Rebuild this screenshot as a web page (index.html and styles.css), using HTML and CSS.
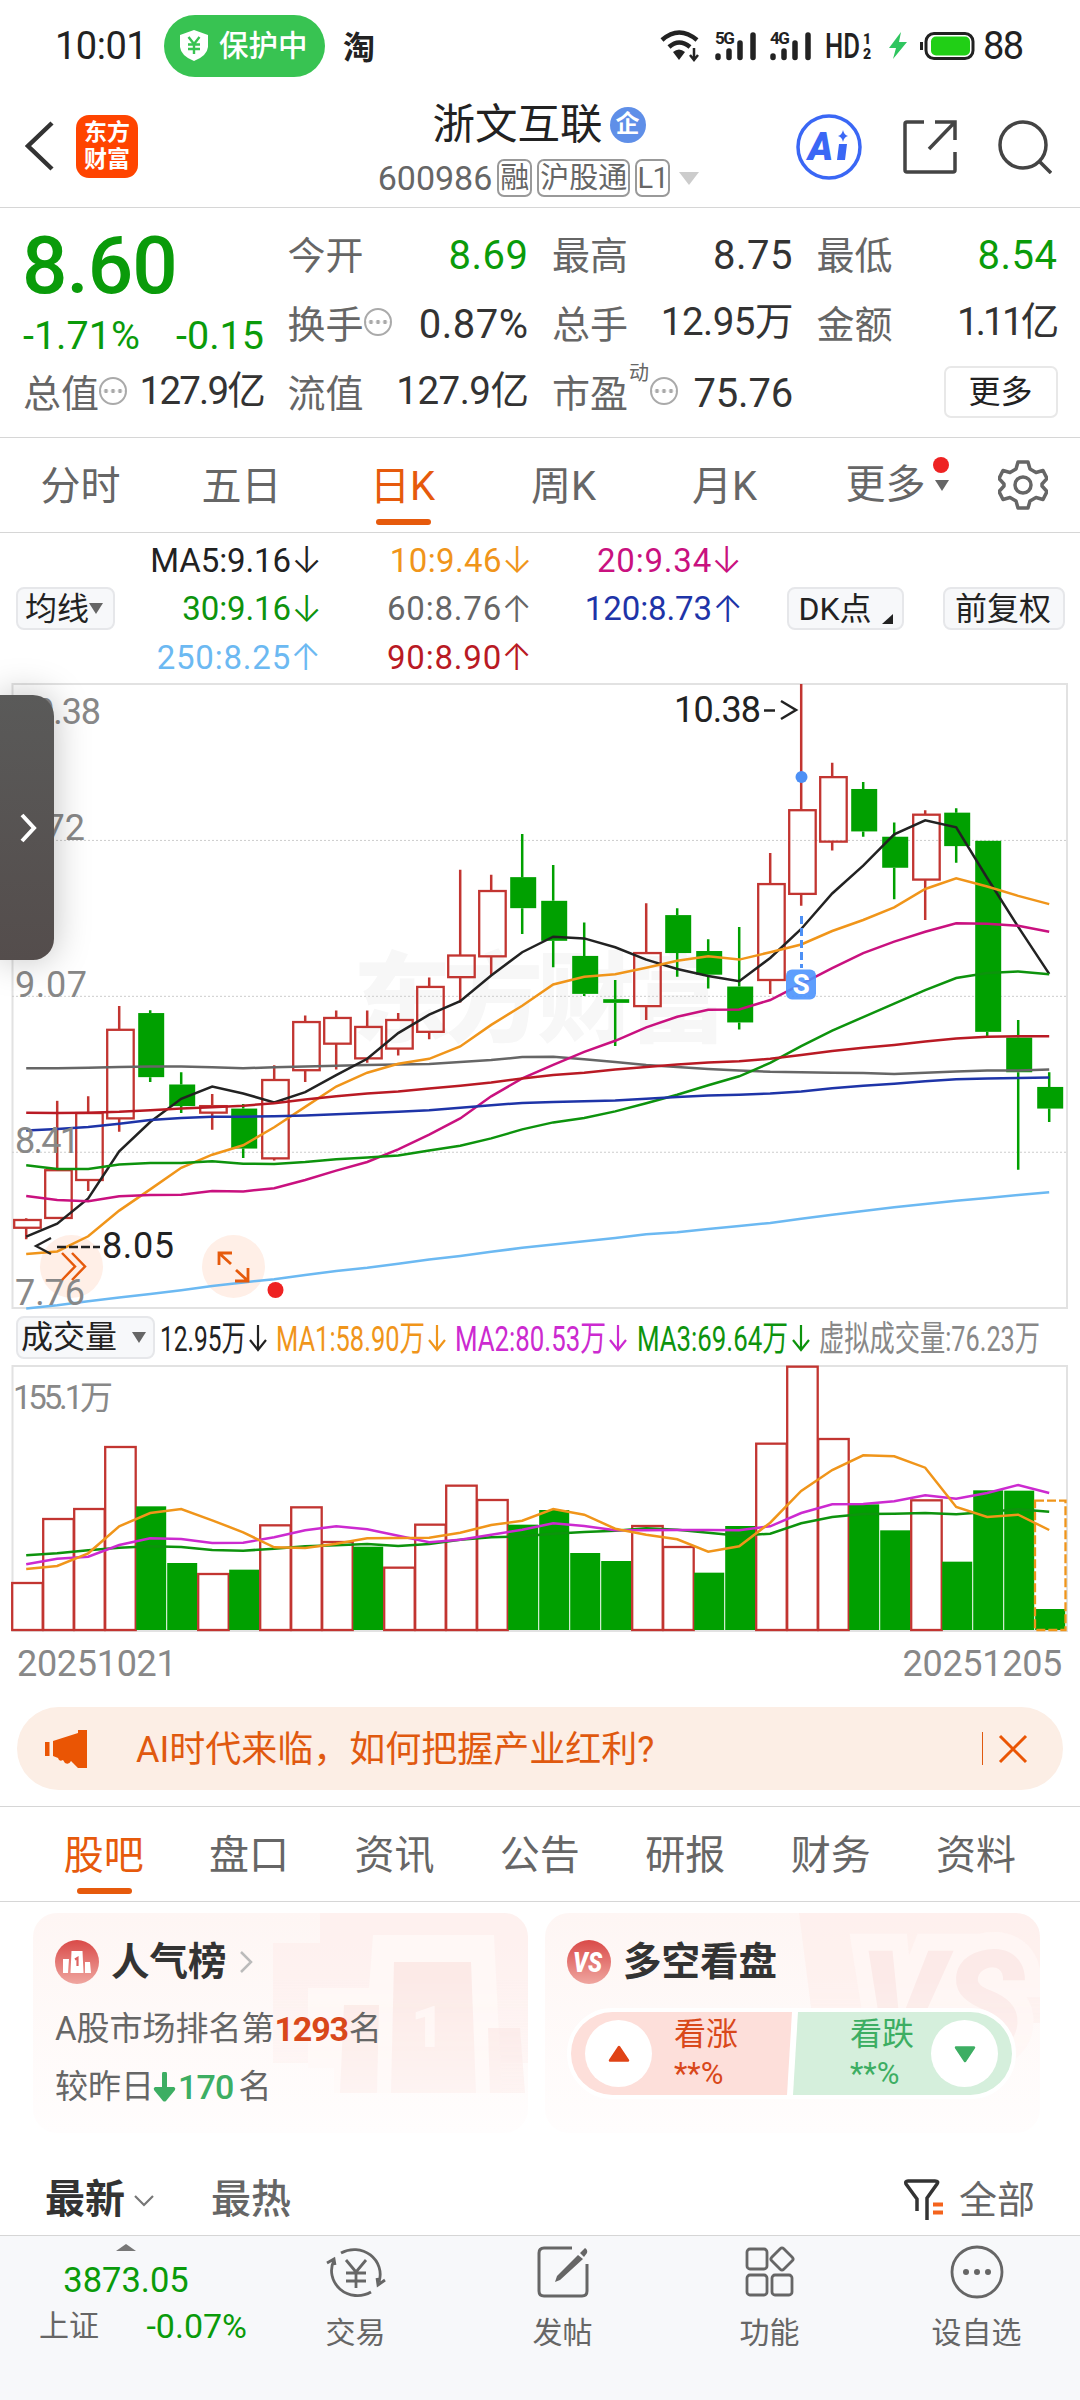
FILE: index.html
```html
<!DOCTYPE html>
<html lang="zh-CN">
<head>
    <meta charset="UTF-8">
    <meta name="viewport" content="width=device-width, initial-scale=1.0">
    <title>浙文互联 600986</title>
    <link rel="stylesheet" href="styles.css">
</head>
<body>
    <div id="app">
        <!-- 状态栏 -->
        <div class="status-bar">
            <span class="time">10:01</span>
            <span class="protect">
                <svg width="28" height="31" viewBox="0 0 28 31"><path d="M14 0L28 5V17Q27 26 14 31Q1 26 0 17V5Z" fill="#fff"/><path d="M8.500 7L14 14L19.500 7M8 14.500H20M8 19H20M14 14V24" fill="none" stroke="#38c352" stroke-width="2.400"/></svg>
                保护中
            </span>
            <span class="tao">淘</span>
            <div class="status-icons">
                <svg width="370" height="40" viewBox="0 0 370 40">
                    <g fill="none" stroke="#222" stroke-width="4.500">
                        <path d="M2 14Q19 -1 37 14"/>
                        <path d="M9 21Q19 12 30 21"/>
                    </g>
                    <path d="M13 26Q19 21 25 26L19 34Z" fill="#222"/>
                    <path d="M34 22V33M30 29L34 34L38 29" fill="none" stroke="#222" stroke-width="2.500"/>
                    <g stroke="#222" stroke-width="5.500" stroke-linecap="round">
                        <path d="M58 30V31.500M69 25V31.500M80 17V31.500M93 9V31.500"/>
                        <path d="M113 30V31.500M124 25V31.500M135 17V31.500M148 9V31.500"/>
                    </g>
                    <text x="55" y="18" class="net">5G</text>
                    <text x="110" y="18" class="net">4G</text>
                    <text x="165" y="32" class="hd" textLength="35" lengthAdjust="spacingAndGlyphs">HD</text>
                    <text x="203" y="18" class="sub">1</text>
                    <text x="203" y="33" class="sub">2</text>
                    <path d="M241 6L229 22H236L233 33L247 16H239Z" fill="#2fc55f"/>
                    <path d="M261.500 16V24" stroke="#222" stroke-width="3"/>
                    <rect x="266" y="7.500" width="47" height="25" rx="8" fill="#fff" stroke="#222" stroke-width="3"/>
                    <rect x="271" y="10.500" width="39" height="19" rx="5" fill="#21cf16"/>
                    <text x="323" y="33" class="bat" textLength="41">88</text>
                </svg>
            </div>
        </div>

        <!-- 顶部导航 -->
        <div class="header">
            <div class="header-left">
                <svg width="30" height="50" viewBox="0 0 30 50"><path d="M27 2L3 25L27 48" fill="none" stroke="#333" stroke-width="4.500"/></svg>
                <div class="logo"><span>东方</span><span>财富</span></div>
            </div>
            <div class="header-title">
                <div class="name">浙文互联<span class="qi">企</span></div>
                <div class="code">600986<span class="tag">融</span><span class="tag">沪股通</span><span class="tag">L1</span><i class="tri tri-light"></i></div>
            </div>
            <div class="header-right">
                <svg width="66" height="66" viewBox="0 0 66 66"><circle cx="33" cy="33" r="31" fill="none" stroke="#3a67f5" stroke-width="3.500"/><text x="12" y="46" class="ai">A</text><path d="M43 30H51L49 46H41Z" fill="#3a67f5"/><path d="M47 16Q48 21 52 22Q48 23 47 28Q46 23 42 22Q46 21 47 16Z" fill="#3a67f5"/></svg>
                <svg width="54" height="54" viewBox="0 0 54 54"><path d="M21 2H4Q2 2 2 4V50Q2 52 4 52H50Q52 52 52 50V32M32 2H52V20M51 3L26 29" fill="none" stroke="#444" stroke-width="3.500"/></svg>
                <svg width="54" height="54" viewBox="0 0 54 54"><circle cx="25" cy="25" r="23" fill="none" stroke="#444" stroke-width="3.500"/><path d="M42 42L53 53" stroke="#444" stroke-width="3.500"/></svg>
            </div>
        </div>

        <!-- 行情 -->
        <div class="quote">
            <div class="price-box">
                <div class="price">8.60</div>
                <div class="change"><span>-1.71%</span><span>-0.15</span></div>
            </div>
            <div class="cell"><label>今开</label><b class="green">8.69</b></div>
            <div class="cell"><label>最高</label><b>8.75</b></div>
            <div class="cell"><label>最低</label><b class="green">8.54</b></div>
            <div class="cell"><label>换手<i class="info"></i></label><b>0.87%</b></div>
            <div class="cell"><label>总手</label><b class="unit">12.95万</b></div>
            <div class="cell"><label>金额</label><b class="unit unit-narrow">1.11亿</b></div>
            <div class="cell"><label>总值<i class="info"></i></label><b class="unit unit-tight">127.9亿</b></div>
            <div class="cell"><label>流值</label><b class="unit">127.9亿</b></div>
            <div class="cell"><label>市盈<sup>动</sup><i class="info"></i></label><b class="pe">75.76</b></div>
            <div class="cell cell-more"><button class="more-btn">更多</button></div>
        </div>

        <!-- 周期切换 -->
        <div class="period-tabs">
            <div class="tab">分时</div>
            <div class="tab">五日</div>
            <div class="tab active">日K</div>
            <div class="tab">周K</div>
            <div class="tab">月K</div>
            <div class="tab tab-more">更多<i class="tri"></i><i class="dot"></i></div>
            <svg class="gear" width="50" height="50" viewBox="0 0 50 50"><path d="M20 2H30L32 9L38 12.500L45 10.500L49 18.500L44 24V26L49 31.500L45 39.500L38 37.500L32 41L30 48H20L18 41L12 37.500L5 39.500L1 31.500L6 26V24L1 18.500L5 10.500L12 12.500L18 9Z" fill="none" stroke="#666" stroke-width="3.500" stroke-linejoin="round"/><circle cx="25" cy="25" r="8" fill="none" stroke="#666" stroke-width="3.500"/></svg>
        </div>

        <!-- 均线 -->
        <div class="ma-bar">
            <button class="chip chip-ma">均线<i class="tri"></i></button>
            <div class="ma-list">
                <span class="ma5">MA5:9.16<em>↓</em></span>
                <span class="ma10">10:9.46<em>↓</em></span>
                <span class="ma20">20:9.34<em>↓</em></span>
                <span class="ma30">30:9.16<em>↓</em></span>
                <span class="ma60">60:8.76<em>↑</em></span>
                <span class="ma120">120:8.73<em>↑</em></span>
                <span class="ma250">250:8.25<em>↑</em></span>
                <span class="ma90">90:8.90<em>↑</em></span>
            </div>
            <button class="chip chip-dk">DK点<i class="corner"></i></button>
            <button class="chip chip-fq">前复权</button>
        </div>

        <!-- K线图 -->
        <div class="kline">
            <svg id="kline" width="1080" height="630" viewBox="0 0 1080 630"></svg>
            <div class="drawer">
                <svg width="20" height="32" viewBox="0 0 20 32"><path d="M3 3L15 16L3 29" fill="none" stroke="#fff" stroke-width="4"/></svg>
            </div>
        </div>

        <!-- 成交量 -->
        <div class="vol-bar">
            <button class="chip chip-vol">成交量<i class="tri"></i></button>
            <svg width="900" height="54" viewBox="160 0 900 54" class="vol-text">
                <text x="160" y="41" textLength="86" lengthAdjust="spacingAndGlyphs" fill="#222">12.95万</text>
                <text x="276" y="41" textLength="149" lengthAdjust="spacingAndGlyphs" fill="#f0951a">MA1:58.90万</text>
                <text x="455" y="41" textLength="151" lengthAdjust="spacingAndGlyphs" fill="#cc2ad0">MA2:80.53万</text>
                <text x="637" y="41" textLength="151" lengthAdjust="spacingAndGlyphs" fill="#0d930d">MA3:69.64万</text>
                <text x="819" y="41" textLength="221" lengthAdjust="spacingAndGlyphs" fill="#888">虚拟成交量:76.23万</text>
                <g fill="none" stroke-width="2.200">
                    <path d="M258 15V40M250 30L258 40L266 30" stroke="#222"/>
                    <path d="M437 15V40M429 30L437 40L445 30" stroke="#f0951a"/>
                    <path d="M618 15V40M610 30L618 40L626 30" stroke="#cc2ad0"/>
                    <path d="M801 15V40M793 30L801 40L809 30" stroke="#0d930d"/>
                </g>
            </svg>
        </div>
        <svg id="volume" width="1080" height="270" viewBox="0 0 1080 270"></svg>
        <div class="dates"><span>20251021</span><span>20251205</span></div>

        <!-- 广告条 -->
        <div class="banner">
            <svg width="42" height="38" viewBox="0 0 42 38"><path d="M0 12H4.500V26H0ZM8 11L33 3V0H42V38H33L26 31Q24 35 20 33L18 30Q14 32 13 28L8 26Z" fill="#ea5504"/></svg>
            <span class="banner-text">AI时代来临，如何把握产业红利?</span>
            <i class="banner-line"></i>
            <svg width="30" height="30" viewBox="0 0 30 30"><path d="M2 2L28 28M28 2L2 28" stroke="#ea5504" stroke-width="3"/></svg>
        </div>

        <!-- 内容切换 -->
        <div class="content-tabs">
            <div class="tab active">股吧</div>
            <div class="tab">盘口</div>
            <div class="tab">资讯</div>
            <div class="tab">公告</div>
            <div class="tab">研报</div>
            <div class="tab">财务</div>
            <div class="tab">资料</div>
        </div>

        <div class="cards">
            <div class="card">
                <svg class="card-bg" width="260" height="220" viewBox="0 0 260 220">
                    <path d="M52 0H236Q260 0 260 24V150H5V30H52Z" fill="#fdece9" opacity=".5"/>
                    <path d="M105 22H226L234 180H66V155H40V75H101Z" fill="#fff8f6"/>
                    <path d="M126 49H203L208 180H123ZM76 92H111L109 180H72ZM220 115H252L257 180H222Z" fill="#fbe6e3" opacity=".8"/>
                    <text x="143" y="134" class="bg-one">1</text>
                </svg>
                <div class="card-title">
                    <svg width="44" height="44" viewBox="0 0 44 44"><defs><linearGradient id="badge" x1="0" y1="0" x2="0" y2="1"><stop offset="0" stop-color="#d94a48"/><stop offset="1" stop-color="#efa6a0"/></linearGradient></defs><circle cx="22" cy="22" r="22" fill="url(#badge)"/><path d="M8 19H14L13 33H8ZM16.500 11H27.500L28.500 33H15.500ZM30 22H35L36 33H30Z" fill="#fff"/><path d="M20 19.500L22.500 18V26" fill="none" stroke="#dd6260" stroke-width="2.200"/></svg>
                    人气榜
                    <svg width="14" height="24" viewBox="0 0 14 24"><path d="M2 2L12 12L2 22" fill="none" stroke="#bbb" stroke-width="2.500"/></svg>
                </div>
                <p>A股市场排名第<b class="rank">1293</b>名</p>
                <p>较昨日<svg class="down" width="23" height="30" viewBox="0 0 23 30"><path d="M11.500 2V18" stroke="#3dae63" stroke-width="5" stroke-linecap="round"/><path d="M2 15H21Q23 16 22 18L13 29Q11.500 30 10 29L1 18Q0 16 2 15Z" fill="#3dae63"/></svg><b class="fall">170</b>名</p>
            </div>
            <div class="card card-vs">
                <svg class="card-bg" width="260" height="220" viewBox="0 0 260 220">
                    <path d="M19 0H236Q260 0 260 24V110H33Z" fill="#fdece9" opacity=".6"/>
                    <text x="80" y="138" class="bg-vs" textLength="164" lengthAdjust="spacingAndGlyphs">VS</text>
                </svg>
                <div class="card-title">
                    <svg width="44" height="44" viewBox="0 0 44 44"><circle cx="22" cy="22" r="22" fill="url(#badge)"/><text x="6" y="32" class="vs" textLength="29" lengthAdjust="spacingAndGlyphs">VS</text></svg>
                    多空看盘
                </div>
                <div class="vote">
                    <div class="vote-up">
                        <span class="ball"><svg width="22" height="18" viewBox="0 0 22 18"><path d="M11 2L20 15.500H2Z" fill="#e04316" stroke="#e04316" stroke-width="2.500" stroke-linejoin="round"/></svg></span>
                        <span class="vote-text"><span>看涨</span><span>**%</span></span>
                    </div>
                    <div class="vote-down">
                        <span class="vote-text"><span>看跌</span><span>**%</span></span>
                        <span class="ball"><svg width="22" height="18" viewBox="0 0 22 18"><path d="M11 16L20 2.500H2Z" fill="#3dae63" stroke="#3dae63" stroke-width="2.500" stroke-linejoin="round"/></svg></span>
                    </div>
                </div>
            </div>
        </div>

        <div class="sort-bar">
            <span class="sort-new">最新</span>
            <svg width="20" height="13" viewBox="0 0 20 13"><path d="M1 2L10 11L19 2" fill="none" stroke="#777" stroke-width="2.200"/></svg>
            <span class="sort-hot">最热</span>
            <svg class="funnel" width="40" height="42" viewBox="0 0 40 42"><path d="M13 32V20L2 5Q1 2 4 2H31Q35 2 33 5L23 19V41" fill="none" stroke="#333" stroke-width="3.500"/><path d="M29 25.500H39M29 33.500H39" stroke="#f4631c" stroke-width="4"/></svg>
            <span class="sort-all">全部</span>
        </div>

        <!-- 底部导航 -->
        <div class="bottom-nav">
            <div class="index-box">
                <i class="tri-up"></i>
                <div class="index-value">3873.05</div>
                <div class="index-row"><span>上证</span><span class="green">-0.07%</span></div>
            </div>
            <div class="nav-item">
                <svg width="60" height="54" viewBox="0 0 60 54"><g fill="none" stroke="#666" stroke-width="2.800"><path d="M15 8A26 25 0 0 1 53 37M45 47A26 25 0 0 1 8 15M1 18L8 14L9 20M59 35L52 40L51 33M20 15L30 27L40 15M20 28H40M20 36H40M30 27V43"/></g></svg>
                <span>交易</span>
            </div>
            <div class="nav-item">
                <svg width="60" height="54" viewBox="0 0 60 54"><path d="M39 3H11Q6 3 6 8V46Q6 51 11 51H49Q54 51 54 46V19" fill="none" stroke="#666" stroke-width="3"/><path d="M45 10L50 14L27 35L22 37L24 31ZM47 8L52 3Q55 5 54 8L51 12Z" fill="#666"/></svg>
                <span>发帖</span>
            </div>
            <div class="nav-item">
                <svg width="60" height="54" viewBox="0 0 60 54"><g fill="none" stroke="#666" stroke-width="2.800"><rect x="7" y="4" width="20" height="20" rx="3"/><rect x="7" y="30" width="20" height="20" rx="3"/><rect x="32" y="30" width="20" height="20" rx="3"/><rect x="33.500" y="5.500" width="17" height="17" rx="2.500" transform="rotate(45 42 14)"/></g></svg>
                <span>功能</span>
            </div>
            <div class="nav-item">
                <svg width="60" height="54" viewBox="0 0 60 54"><circle cx="30" cy="27" r="25" fill="none" stroke="#666" stroke-width="2.800"/><circle cx="19" cy="27" r="3" fill="#666"/><circle cx="30" cy="27" r="3" fill="#666"/><circle cx="41" cy="27" r="3" fill="#666"/></svg>
                <span>设自选</span>
            </div>
        </div>
    </div>

    <script src="chart.js"></script>
</body>
</html>
```
FILE: styles.css
```css
* { box-sizing: border-box; }

body {
    margin: 0;
    background: #fff;
    color: #333;
    font-family: Roboto, "Noto Sans CJK SC", sans-serif;
}

#app {
    width: 1080px;
    height: 2400px;
    overflow: hidden;
    display: flex;
    flex-direction: column;
}

svg { display: block; flex: none; }
i, em { font-style: normal; }
button {
    font-family: inherit;
    color: #222;
    padding: 0;
}
.green { color: #0a9b0a; }

.tri {
    border: 7px solid transparent;
    border-top: 11px solid #666;
    border-bottom: 0;
}
.tri-light {
    border-width: 13px 10px 0;
    border-top-color: #ccc;
}

/* 状态栏 */
.status-bar {
    height: 93px;
    display: flex;
    align-items: center;
    padding-left: 55px;
    padding-bottom: 1px;
    color: #222;
}
.time { font-size: 38px; width: 109px; letter-spacing: -0.500px; }
.protect {
    width: 161px;
    height: 62px;
    border-radius: 31px;
    background: #38c352;
    color: #fff;
    font-size: 29.500px;
    line-height: 58px;
    padding-bottom: 1px;
    font-weight: 500;
    display: flex;
    align-items: center;
    gap: 11px;
    padding-left: 16px;
}
.tao { font-size: 32px; font-weight: 700; margin-left: 18px; margin-top: -2px; }
.status-icons { margin-left: auto; margin-right: 50px; }
.net { font-size: 17px; font-weight: 700; fill: #222; letter-spacing: -1.500px; }
.hd { font-size: 35px; font-weight: 500; fill: #222; }
.sub { font-size: 14px; font-weight: 900; fill: #222; }
.bat { font-size: 38px; fill: #222; }

/* 顶部导航 */
.header {
    height: 115px;
    border-bottom: 1px solid #d6d6d6;
    display: flex;
    justify-content: space-between;
    padding: 0 28px 0 25px;
}
.header-left { display: flex; align-items: center; gap: 21px; width: 260px; }
.header-left svg { margin-top: -8px; }
.logo {
    width: 62px;
    height: 63px;
    margin-top: -8px;
    border-radius: 13px;
    background: #ff4400;
    color: #fff;
    font-size: 23px;
    font-weight: 700;
    line-height: 27px;
    display: flex;
    flex-direction: column;
    align-items: center;
    justify-content: center;
}
.header-title { display: flex; flex-direction: column; align-items: center; width: 400px; }
.name {
    font-size: 42.500px;
    line-height: 64px;
    color: #222;
    display: flex;
    align-items: center;
    margin-left: -3px;
}
.qi {
    width: 36px;
    height: 36px;
    border-radius: 50%;
    background: #5f8fe8;
    color: #fff;
    font-size: 24px;
    font-weight: 700;
    line-height: 34px;
    text-align: center;
    margin-left: 7px;
}
.code {
    font-size: 34px;
    line-height: 42px;
    color: #666;
    display: flex;
    align-items: center;
    gap: 5px;
    margin-left: -4px;
}
.tag {
    border: 2px solid #999;
    border-radius: 7px;
    font-size: 29px;
    line-height: 34px;
    padding: 0 1px;
}
.tag:nth-child(3) { padding: 0; letter-spacing: -0.500px; }
.code .tri { margin-left: 4px; }
.header-right { display: flex; align-items: center; gap: 41px; padding-bottom: 7px; }
.ai { font: italic 900 38px Roboto; fill: #3a67f5; }

/* 行情 */
.quote {
    height: 230px;
    border-bottom: 1px solid #d6d6d6;
    padding: 12px 22px 0 23px;
    display: grid;
    grid-template-columns: repeat(4, 241px);
    grid-template-rows: repeat(3, 69px);
    column-gap: 23.500px;
}
.price-box { grid-row: span 2; color: #0a9b0a; }
.price { font-size: 80px; font-weight: 500; line-height: 92px; letter-spacing: -1px; margin-left: -1px; }
.change { display: flex; justify-content: space-between; font-size: 39.500px; line-height: 48px; }
.cell {
    display: flex;
    justify-content: space-between;
    align-items: center;
    font-size: 38px;
    white-space: nowrap;
}
.cell label { color: #666; display: flex; align-items: center; margin-top: -4px; }
.cell b { font-weight: 400; font-size: 40px; letter-spacing: 0.500px; margin-top: 1px; }
.cell .unit { font-size: 38.500px; line-height: 40px; letter-spacing: -0.500px; margin-top: -3px; }
.cell .unit-tight { letter-spacing: -1.800px; }
.cell .unit-narrow { letter-spacing: -2.800px; margin-right: 1px; }
.cell .pe { letter-spacing: -0.200px; }
.cell sup { font-size: 20px; line-height: 20px; align-self: flex-start; margin: 0 1px 0; }
.info {
    width: 28px;
    height: 28px;
    border: 2px solid #aaa;
    border-radius: 50%;
    background: radial-gradient(circle, #aaa 1.800px, transparent 2.200px) center / 7px 24px repeat-x;
}
.cell-more { justify-content: flex-end; }
.more-btn {
    width: 114px;
    height: 52px;
    margin-top: -2px;
    background: #fff;
    border: 2px solid #e8e8e8;
    border-radius: 7px;
    font-size: 32px;
    line-height: 44px;
}

/* 周期切换 */
.period-tabs {
    height: 95px;
    border-bottom: 1px solid #d6d6d6;
    display: flex;
    align-items: center;
}
.tab {
    width: 161px;
    height: 100%;
    font-size: 40px;
    line-height: 98px;
    text-align: center;
    color: #666;
    position: relative;
}
.tab.active { color: #e65a0c; }
.tab.active::after {
    content: "";
    position: absolute;
    left: calc(50% - 27px);
    bottom: 7px;
    width: 55px;
    height: 6px;
    border-radius: 3px;
    background: #e65a0c;
}
.tab-more { display: flex; align-items: center; justify-content: center; width: 184px; gap: 9px; }
.dot {
    position: absolute;
    right: 40px;
    top: 19px;
    width: 16px;
    height: 16px;
    border-radius: 50%;
    background: #ee2222;
}
.gear { margin-left: 9px; }

/* 均线 */
.ma-bar {
    height: 147px;
    display: flex;
    align-items: center;
    padding: 4px 15px 0 16px;
}
.chip {
    height: 43px;
    background: #f7f8fa;
    border: 2px solid #e6e7ea;
    border-radius: 8px;
    font-size: 32px;
    line-height: 38px;
    display: flex;
    align-items: center;
    justify-content: center;
    flex: none;
}
.chip-ma { width: 99px; padding-right: 3px; }
.ma-list {
    width: 628px;
    display: grid;
    grid-template-columns: 207px 211px 210px;
    grid-template-rows: repeat(3, 48.500px);
    justify-items: end;
    align-items: center;
    font-size: 33px;
}
.ma-list span { display: flex; align-items: center; letter-spacing: -0.100px; }
.ma-list em {
    width: 31px;
    font-family: Inter;
    font-size: 37px;
    font-weight: 300;
    line-height: 40px;
    display: flex;
    justify-content: flex-end;
}
.ma-list .ma10 { letter-spacing: 0.400px; }
.ma-list .ma20, .ma-list .ma60, .ma-list .ma250, .ma-list .ma90 { letter-spacing: 0.800px; }
.ma5 { color: #222; }
.ma10 { color: #f0951a; }
.ma20 { color: #c9117f; }
.ma30 { color: #0d930d; }
.ma60 { color: #666; }
.ma120 { color: #1e34a8; }
.ma250 { color: #6cb9f2; }
.ma90 { color: #b91a24; }
.chip-dk { width: 117px; margin-left: 44px; gap: 10px; }
.corner { border-left: 11px solid transparent; border-bottom: 10px solid #222; margin-top: 20px; }
.chip-fq { width: 122px; margin-left: auto; padding-right: 2px; }

/* 图表 */
.kline { position: relative; height: 630px; }
.drawer {
    position: absolute;
    left: 0;
    top: 15px;
    width: 54px;
    height: 265px;
    padding-left: 19px;
    border-radius: 0 21px 21px 0;
    background: linear-gradient(#5a5a59, #544d4c);
    box-shadow: 0 0 36px rgba(0, 0, 0, 0.250);
    display: flex;
    align-items: center;
}
.axis { font-size: 36px; fill: #888; }
.mark { font-size: 36px; fill: #222; }
.watermark { font-size: 98px; font-weight: 900; fill: #f7f7f7; }
.vol-bar { height: 54px; display: flex; padding-left: 16px; align-items: center; }
.chip-vol { width: 139px; gap: 15px; margin-right: 5px; padding-right: 4px; }
.vol-text { font-size: 35.500px; }
.dates {
    height: 73px;
    padding: 8px 18px 0 17px;
    display: flex;
    justify-content: space-between;
    font-size: 36px;
    line-height: 44px;
    letter-spacing: -0.300px;
    color: #888;
}

/* 广告条 */
.banner {
    height: 83px;
    margin: 0 17px;
    border-radius: 42px;
    background: #fceee5;
    color: #e0590f;
    display: flex;
    align-items: center;
    padding: 0 35px 0 28px;
    flex: none;
}
.banner-text { font-size: 36px; line-height: 80px; margin-left: 49px; margin-top: 2px; }
.banner-line { width: 1.500px; height: 33px; background: #e0590f; margin-left: auto; margin-right: 15px; }

.content-tabs {
    margin-top: 16px;
    height: 96px;
    border-top: 1px solid #d6d6d6;
    border-bottom: 1px solid #d6d6d6;
    padding-left: 31px;
    display: flex;
    flex: none;
}
.content-tabs .tab { width: 145.400px; }

/* 卡片 */
.cards { display: flex; gap: 17px; padding: 11px 33px 0; }
.card {
    position: relative;
    width: 495px;
    height: 220px;
    border-radius: 24px;
    background: linear-gradient(#fef6f4, #fffdfd);
    padding: 21px 22px 0;
    overflow: hidden;
}
.card-bg {
    position: absolute;
    right: 0;
    top: 0;
    mask-image: linear-gradient(#000 30%, rgba(0, 0, 0, 0.400) 85%);
}
.card-title {
    position: relative;
    height: 56px;
    display: flex;
    align-items: center;
    gap: 12px;
    font-size: 38.500px;
    line-height: 56px;
    font-weight: 700;
    color: #333;
}
.card p {
    position: relative;
    margin: 14px 0 0;
    height: 44px;
    font-size: 33px;
    line-height: 44px;
    color: #666;
    display: flex;
    align-items: center;
}
.card-title + p { margin-top: 17px; }
.rank { color: #d9481a; font-size: 34px; margin: 0 1px 0 0; letter-spacing: -1.200px; }
.down { margin: 0 2px 0 -1px; }
.fall { color: #3dae63; font-size: 34px; font-weight: 500; margin-right: 5px; letter-spacing: -0.800px; }
.bg-one { font-size: 58px; font-weight: 900; fill: #fff6f4; }
.bg-vs { font: italic 900 140px Roboto; fill: #fceae8; stroke: #fff6f4; stroke-width: 34px; paint-order: stroke; }
.vs { font: italic 900 28px Roboto; fill: #fff; }
.vote {
    position: relative;
    display: flex;
    width: 449px;
    height: 91px;
    margin: 18px 0 0 0;
    border: 4px solid #fff;
    border-radius: 46px;
    background: #fff;
    overflow: hidden;
}
.vote-up, .vote-down { display: flex; align-items: center; }
.vote-up {
    width: 221px;
    padding-left: 14px;
    gap: 22px;
    background: #fddfda;
    color: #d9481a;
    clip-path: polygon(0 0, 100% 0, calc(100% - 5px) 100%, 0 100%);
}
.vote-down {
    width: 220px;
    padding-right: 14px;
    gap: 17px;
    justify-content: flex-end;
    background: #d5efdc;
    color: #3dae63;
    clip-path: polygon(6px 0, 100% 0, 100% 100%, 1px 100%);
}
.ball {
    width: 67px;
    height: 67px;
    border-radius: 50%;
    background: #fff;
    display: flex;
    align-items: center;
    justify-content: center;
}
.vote-text { display: flex; flex-direction: column; font-size: 32px; line-height: 40px; }
.vote-text span:last-child { font-size: 31px; line-height: 39px; }

.sort-bar {
    height: 102px;
    display: flex;
    align-items: center;
    padding: 32px 45px 0 45px;
    font-size: 40px;
    line-height: 60px;
    color: #666;
    flex: none;
}
.sort-new { font-weight: 700; color: #333; margin-right: 9px; }
.sort-hot { font-weight: 500; margin-left: 57px; }
.funnel { margin-left: auto; margin-right: 15px; }
.sort-all { font-size: 38px; }

/* 底部导航 */
.bottom-nav {
    height: 165px;
    background: #f7f8fa;
    border-top: 1px solid #d6d6d6;
    display: flex;
    flex: none;
}
.index-box { width: 252px; display: flex; flex-direction: column; align-items: center; padding-top: 8px; }
.tri-up { border: 10px solid transparent; border-top: 0; border-bottom: 7px solid #777; }
.index-value { font-size: 34.500px; line-height: 44px; margin-top: 7px; color: #0a9b0a; }
.index-row {
    width: 208px;
    display: flex;
    justify-content: space-between;
    align-self: flex-start;
    margin-left: 39px;
    font-size: 30px;
    line-height: 48px;
    color: #666;
}
.index-row .green { font-size: 34px; }
.nav-item { width: 207px; display: flex; flex-direction: column; align-items: center; padding-top: 9px; font-size: 30px; line-height: 40px; color: #666; }
.nav-item span { margin-top: 14px; }
```
FILE: chart.js
```js
const RED = '#c23531';
const GREEN = '#00a000';

// x 坐标：第 i 根K线的中心
const cx = i => 26.2 + 31 * i;

// [实体上沿, 实体下沿, 最高, 最低, 涨1跌0]
const candles = [
    [1323, 1342, 1319, 1370, 1], [1201, 1318, 1031, 1318, 1], [1061, 1225, 1020, 1252, 1],
    [857, 1074, 799, 1107, 1], [816, 973, 809, 985, 0], [991, 1044, 961, 1061, 0],
    [1044, 1060, 1014, 1102, 1], [1050, 1148, 1039, 1171, 0], [980, 1172, 944, 1177, 1],
    [838, 956, 822, 985, 1], [828, 891, 810, 954, 1], [850, 927, 810, 938, 1],
    [833, 903, 816, 920, 1], [752, 862, 729, 880, 1], [675, 728, 465, 790, 1],
    [517, 677, 477, 725, 1], [483, 559, 377, 622, 0], [541, 639, 453, 704, 0],
    [676, 769, 594, 774, 0], [782, 791, 735, 897, 0], [669, 799, 547, 833, 1],
    [576, 669, 559, 727, 0], [664, 722, 635, 756, 0], [751, 839, 605, 856, 0],
    [500, 735, 424, 769, 1], [319, 524, 10, 553, 1], [238, 396, 203, 418, 1],
    [267, 371, 250, 384, 0], [384, 460, 349, 537, 0], [330, 489, 319, 588, 1],
    [325, 407, 314, 448, 0], [394, 862, 394, 874, 0], [876, 961, 833, 1200, 0],
    [997, 1050, 961, 1083, 0]
];

const maLines = [
    ['#666666', [951, 951, 950, 948, 947, 947, 949, 951, 949, 947, 945, 943, 942, 941, 936, 931, 924, 923, 929, 936, 943, 948, 953, 957, 960, 961, 962, 963, 965, 962, 959, 957, 957, 954]],
    ['#222222', [1364, 1332, 1270, 1155, 1083, 1026, 996, 1013, 1035, 1010, 968, 928, 865, 820, 787, 724, 667, 629, 633, 655, 685, 708, 725, 738, 681, 610, 523, 455, 378, 344, 361, 485, 605, 720]],
    ['#f0951a', [1406, 1400, 1363, 1300, 1248, 1195, 1163, 1140, 1096, 1046, 996, 962, 940, 928, 898, 845, 798, 746, 727, 721, 705, 688, 677, 685, 667, 648, 615, 588, 557, 512, 486, 506, 529, 549]],
    ['#c9117f', [1264, 1274, 1277, 1265, 1262, 1261, 1252, 1253, 1245, 1225, 1202, 1181, 1150, 1114, 1074, 1020, 976, 943, 911, 884, 851, 825, 808, 807, 784, 745, 706, 669, 641, 617, 596, 597, 602, 617]],
    ['#0d930d', [1189, 1198, 1198, 1187, 1183, 1183, 1179, 1185, 1186, 1181, 1174, 1170, 1165, 1153, 1141, 1123, 1101, 1084, 1073, 1057, 1037, 1016, 993, 971, 938, 897, 859, 826, 793, 760, 730, 718, 714, 721]],
    ['#b91a24', [1060, 1061, 1060, 1058, 1054, 1050, 1047, 1043, 1037, 1028, 1020, 1013, 1008, 1001, 994, 986, 976, 968, 962, 954, 948, 942, 937, 934, 928, 919, 909, 901, 894, 886, 878, 874, 873, 873]],
    ['#1e34a8', [1104, 1100, 1095, 1087, 1078, 1073, 1070, 1070, 1069, 1067, 1064, 1061, 1058, 1054, 1048, 1042, 1036, 1034, 1032, 1030, 1026, 1022, 1018, 1016, 1013, 1008, 1000, 994, 989, 983, 978, 976, 975, 974]],
    ['#6cb9f2', [1540, 1532, 1522, 1513, 1504, 1495, 1485, 1476, 1468, 1458, 1448, 1440, 1430, 1420, 1411, 1401, 1391, 1383, 1375, 1367, 1358, 1353, 1345, 1338, 1330, 1320, 1310, 1301, 1292, 1284, 1276, 1269, 1262, 1255]]
];

// [柱顶, 涨1跌0]
const volumes = [
    [819, 1], [627, 1], [597, 1], [411, 1], [589, 0], [759, 0], [792, 1], [779, 0], [646, 1],
    [592, 1], [696, 1], [710, 0], [773, 1], [644, 1], [527, 1], [570, 1], [644, 0], [600, 0],
    [729, 0], [753, 0], [648, 1], [711, 1], [788, 0], [648, 0], [401, 1], [170, 1], [387, 1],
    [583, 0], [661, 0], [571, 1], [755, 0], [541, 0], [542, 0], [897, 0]
];

const volLines = [
    ['#0d930d', [736, 730, 721, 713, 709, 711, 720, 722, 716, 709, 706, 702, 708, 702, 689, 682, 679, 671, 666, 662, 655, 659, 668, 677, 671, 640, 621, 612, 611, 609, 613, 606, 598, 605]],
    ['#cc2ad0', [763, 746, 740, 705, 685, 687, 699, 698, 682, 661, 649, 658, 677, 697, 689, 674, 659, 640, 648, 661, 661, 660, 660, 661, 649, 609, 583, 582, 574, 556, 566, 549, 525, 549]],
    ['#f0951a', [777, 768, 730, 649, 609, 597, 631, 667, 712, 714, 701, 685, 684, 683, 668, 645, 632, 597, 614, 656, 674, 688, 725, 709, 638, 543, 480, 436, 439, 473, 591, 621, 614, 660]]
];

function polyline(values, color, y) {
    const points = values.map((v, i) => `${cx(i)},${y(v).toFixed(1)}`).join(' ');
    return `<polyline points="${points}" fill="none" stroke="${color}" stroke-width="2.5"/>`;
}

function drawKline() {
    const y = v => v / 2.45;
    let html = '<rect x="12.5" y="4" width="1054.500" height="624" fill="none" stroke="#e2e2e2" stroke-width="2"/>';
    html += '<text x="353" y="354" class="watermark" textLength="374">东方财富</text>';
    [393, 775, 1157].forEach(v => {
        html += `<path d="M12 ${y(v)}H1067" stroke="#ccc" stroke-width="1" stroke-dasharray="2 2"/>`;
    });
    html += '<circle cx="71.5" cy="586.5" r="31.5" fill="#ffefe7"/><circle cx="233.5" cy="586.5" r="31.5" fill="#ffefe7"/>';

    candles.forEach(([top, bottom, high, low, up], i) => {
        const x = cx(i);
        const color = up ? RED : GREEN;
        html += `<path d="M${x} ${y(high)}V${y(top)}M${x} ${y(bottom)}V${y(low)}" stroke="${color}" stroke-width="2.5"/>`;
        if (up) {
            html += `<rect x="${x - 12}" y="${y(top)}" width="26.5" height="${y(bottom - top)}" fill="none" stroke="${color}" stroke-width="2.3"/>`;
        } else {
            html += `<rect x="${x - 12}" y="${y(top)}" width="26" height="${y(bottom - top)}" fill="${color}"/>`;
        }
    });
    maLines.forEach(([color, values]) => { html += polyline(values, color, y); });

    // 坐标
    html += '<text x="15" y="44" class="axis" textLength="86">10.38</text>';
    html += '<text x="15" y="160" class="axis" textLength="70">9.72</text>';
    html += '<text x="15" y="316.500" class="axis" textLength="72">9.07</text>';
    html += '<text x="15" y="472.500" class="axis" textLength="65">8.41</text>';
    html += '<text x="15" y="624.500" class="axis" textLength="70">7.76</text>';

    // 最高最低标注
    html += '<text x="674" y="42" class="mark" textLength="87">10.38</text>';
    html += '<path d="M764 30.5H775M781 21L796 30L781 39" fill="none" stroke="#222" stroke-width="2.5"/>';
    html += '<text x="102" y="577.500" class="mark" textLength="72">8.05</text>';
    html += '<path d="M51 558L36 566L51 574" fill="none" stroke="#222" stroke-width="2.3"/>';
    html += '<path d="M57 567H100" stroke="#222" stroke-width="2.3" stroke-dasharray="9 3"/>';

    // 买卖点
    html += '<circle cx="801.500" cy="97" r="6" fill="#4d90f5"/>';
    html += '<path d="M801.500 236V288" stroke="#4d90f5" stroke-width="3" stroke-dasharray="8 4"/>';
    html += '<rect x="786" y="289.500" width="30" height="30" rx="6" fill="#4d94fd" opacity=".9"/>';
    html += '<text x="801" y="314" text-anchor="middle" font-size="28" font-weight="700" fill="#fff">S</text>';

    // 悬浮按钮
    html += '<path d="M62 573L75 586.5L62 600M72 573L85 586.500L72 600" fill="none" stroke="#e65a0c" stroke-width="2.500"/>';
    html += '<path d="M219 585V573H232M220 574L231 584M235 601H248V588M247 600L236 590" fill="none" stroke="#e65a0c" stroke-width="2.800"/>';
    html += '<circle cx="275.500" cy="610" r="8" fill="#ee2222"/>';
    document.getElementById('kline').innerHTML = html;
}

function drawVolume() {
    const y = v => v / 3 - 54;
    const base = y(960);
    let html = '<rect x="12.5" y="2" width="1054.500" height="265" fill="none" stroke="#e2e2e2" stroke-width="2"/>';
    html += '<text x="13" y="44.500" font-size="33" fill="#888" textLength="100">155.1万</text>';

    volumes.forEach(([top, up], i) => {
        const x = cx(i) - 14;
        if (up) {
            html += `<rect x="${x}" y="${y(top)}" width="30.5" height="${base - y(top)}" fill="#fff" stroke="${RED}" stroke-width="2.3"/>`;
        } else {
            html += `<rect x="${x}" y="${y(top)}" width="30" height="${base - y(top)}" fill="${GREEN}"/>`;
        }
    });
    // 虚拟成交量
    html += `<rect x="1035" y="${y(572)}" width="30.5" height="${base - y(572)}" fill="none" stroke="#f0951a" stroke-width="2.300" stroke-dasharray="9 3"/>`;
    volLines.forEach(([color, values]) => { html += polyline(values, color, y); });
    document.getElementById('volume').innerHTML = html;
}

drawKline();
drawVolume();
```
